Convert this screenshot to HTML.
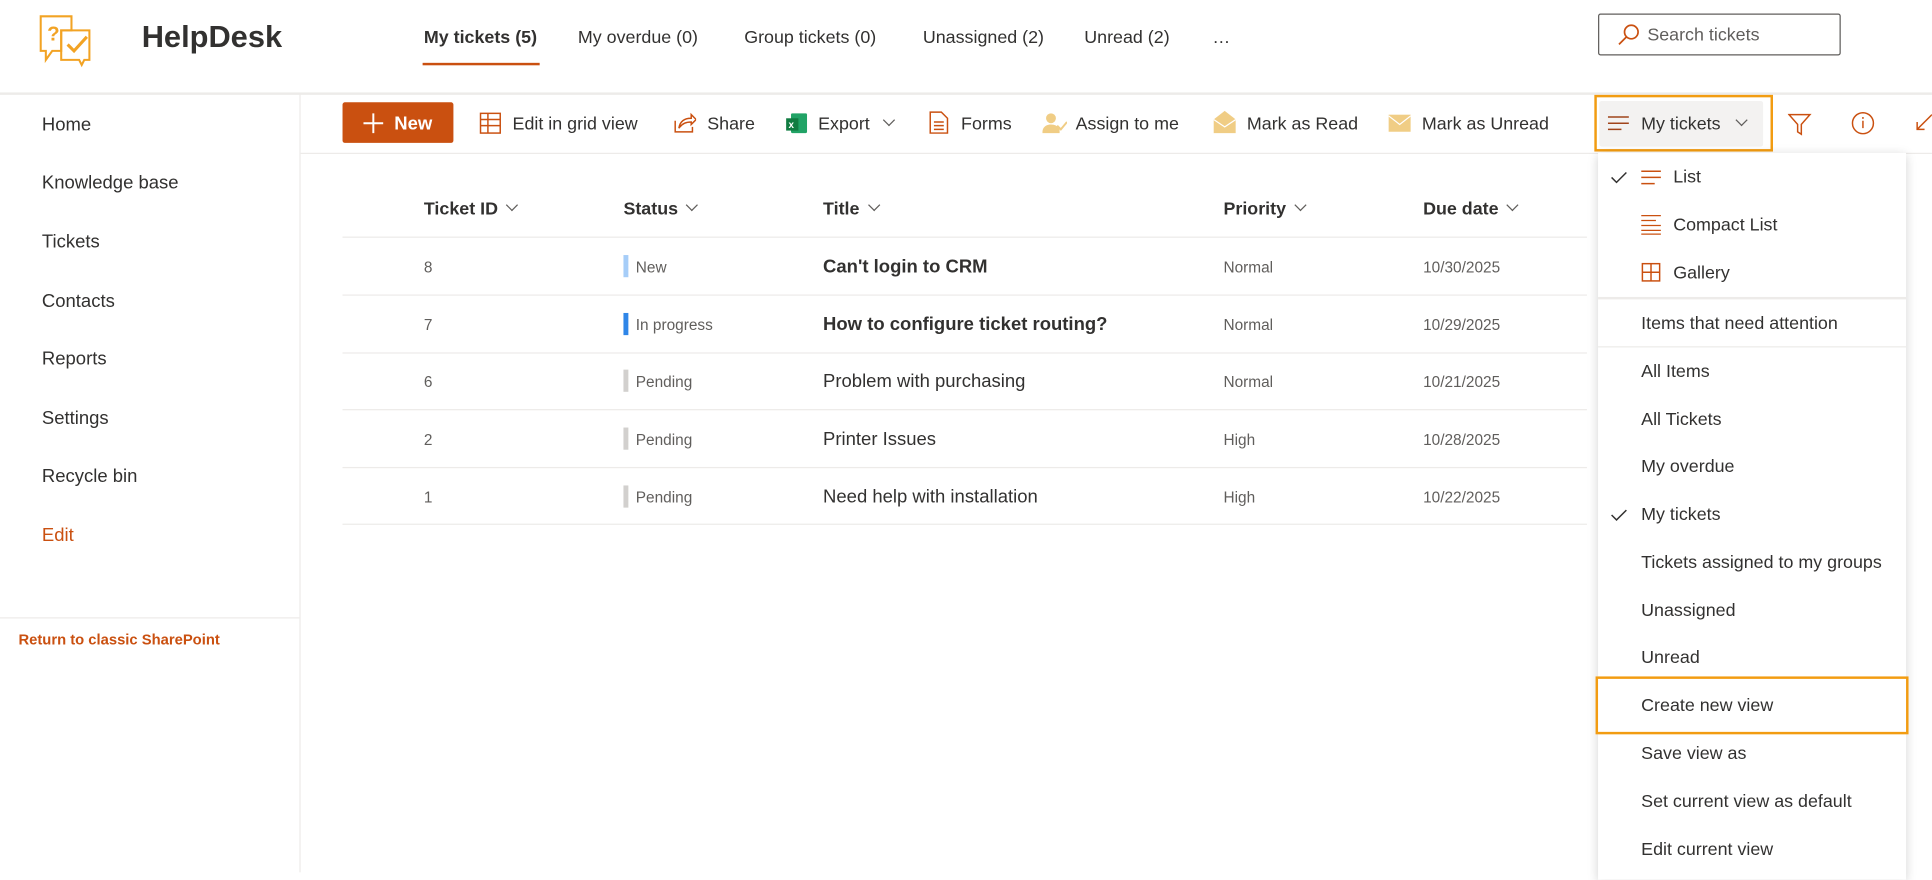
<!DOCTYPE html>
<html><head><meta charset="utf-8"><style>
*{margin:0;padding:0;box-sizing:border-box}
html,body{width:1932px;height:872px;overflow:hidden;background:#fff}
#w{position:absolute;left:0;top:0;width:1568px;height:708px;transform:scale(1.2321);transform-origin:0 0;font-family:"Liberation Sans",sans-serif;color:#323130}
.a{position:absolute;white-space:nowrap}
.t{font-size:14.5px;line-height:18px}
.hl{position:absolute;background:#edebe9;height:1px}
svg{position:absolute}
.nav{position:absolute;left:34px;font-size:15px;color:#323130}
.o{color:#ca5010}
.th{font-size:14.5px;font-weight:bold;color:#323130}
.chev{display:inline-block;width:7px;height:7px;border-right:1px solid #605e5c;border-bottom:1px solid #605e5c;transform:rotate(45deg);margin-left:8px;position:relative;top:-4px}
.r{font-size:12.5px;color:#605e5c}
.ti{font-size:15px;color:#323130}
.bar{position:absolute;width:4px;height:18px}
.mi{position:absolute;left:1332px;font-size:14.5px;color:#323130}
</style></head><body><div id="w">
<!-- logo -->
<svg style="left:32px;top:11px" width="52" height="44" viewBox="0 0 50 42" fill="none" stroke="#f2a324" stroke-width="1.6">
<path d="M1 2h24v11H17v16H10l-5 7v-7H1z"/>
<path d="M17 13h22v23h-4l-2 4-2-4H17z"/>
<text x="6" y="21" fill="#f2a324" stroke="none" font-size="16" font-weight="bold" font-family="Liberation Sans">?</text>
<path d="M22 24l5 5 10-11" stroke-width="2.4"/>
</svg>
<div class="a" style="left:115px;top:16px;font-size:25px;font-weight:bold;color:#323130">HelpDesk</div>
<div class="a t" style="left:344px;top:22px;font-weight:bold">My tickets (5)</div>
<div class="a" style="left:343px;top:51px;width:95px;height:2px;background:#ca5010"></div>
<div class="a t" style="left:469px;top:22px">My overdue (0)</div>
<div class="a t" style="left:604px;top:22px">Group tickets (0)</div>
<div class="a t" style="left:749px;top:22px">Unassigned (2)</div>
<div class="a t" style="left:880px;top:22px">Unread (2)</div>
<div class="a t" style="left:984px;top:22px">…</div>
<div class="a" style="left:1297px;top:11px;width:197px;height:34px;border:1px solid #605e5c;border-radius:2px"></div>
<svg style="left:1313px;top:19px" width="18" height="18" viewBox="0 0 18 18" fill="none" stroke="#ca5010" stroke-width="1.4"><circle cx="11" cy="7" r="5.5"/><path d="M7 11l-6 6"/></svg>
<div class="a t" style="left:1337px;top:20px;color:#605e5c">Search tickets</div>
<div class="hl" style="left:0;top:75px;width:1568px;height:2px"></div>
<!-- left nav -->
<div class="a" style="left:243px;top:76px;width:1px;height:632px;background:#edebe9"></div>
<div class="nav a" style="top:93px">Home</div>
<div class="nav a" style="top:140px">Knowledge base</div>
<div class="nav a" style="top:188px">Tickets</div>
<div class="nav a" style="top:236px">Contacts</div>
<div class="nav a" style="top:283px">Reports</div>
<div class="nav a" style="top:331px">Settings</div>
<div class="nav a" style="top:378px">Recycle bin</div>
<div class="nav a" style="top:426px;color:#ca5010">Edit</div>
<div class="hl" style="left:0;top:501px;width:243px"></div>
<div class="a o" style="left:15px;top:512px;font-size:12px;font-weight:bold">Return to classic SharePoint</div>
<!-- command bar -->
<div class="hl" style="left:244px;top:124px;width:1324px"></div>
<div class="a" style="left:278px;top:83px;width:90px;height:33px;background:#ca5010;border-radius:2px"></div>
<svg style="left:294px;top:91px" width="18" height="18"><path d="M9 1v16M1 9h16" stroke="#fff" stroke-width="1.6"/></svg>
<div class="a" style="left:320px;top:92px;color:#fff;font-weight:bold;font-size:15px">New</div>
<svg style="left:389px;top:91px" width="18" height="18" fill="none" stroke="#ca5010" stroke-width="1.2"><rect x="1" y="1" width="16" height="16"/><path d="M1 6h16M1 11h16M7 1v16"/></svg>
<div class="a t" style="left:416px;top:92px">Edit in grid view</div>
<svg style="left:547px;top:90px" width="18" height="18" fill="none" stroke="#ca5010" stroke-width="1.2"><path d="M1 8v9h14v-4"/><path d="M4 14c1-6 5-8 10-8V3l4 4-4 4V9c-4 0-7 1-10 5z"/></svg>
<div class="a t" style="left:574px;top:92px">Share</div>
<svg style="left:638px;top:91px" width="18" height="18"><rect x="4" y="1" width="13" height="16" rx="1" fill="#21a366"/><rect x="0" y="5" width="10" height="10" fill="#107c41"/><text x="2" y="13" font-size="8" fill="#fff" font-family="Liberation Sans" font-weight="bold">x</text></svg>
<div class="a t" style="left:664px;top:92px">Export <span class="chev"></span></div>
<svg style="left:754px;top:90px" width="16" height="19" fill="none" stroke="#ca5010" stroke-width="1.2"><path d="M1 1h9l5 5v12H1z"/><path d="M4 9h8M4 12h8M4 15h8"/></svg>
<div class="a t" style="left:780px;top:92px">Forms</div>
<svg style="left:846px;top:91px" width="20" height="18"><circle cx="7" cy="5" r="4" fill="#f0cd85"/><path d="M0 17c0-5 3-7 7-7s6 2 7 4v3z" fill="#f0cd85"/><path d="M12 11l3 3 5-6" stroke="#f0cd85" stroke-width="1.6" fill="none"/></svg>
<div class="a t" style="left:873px;top:92px">Assign to me</div>
<svg style="left:985px;top:89px" width="18" height="20"><path d="M0 8l9-7 9 7v11H0z" fill="#f0cd85"/><path d="M0 8l9 6 9-6" stroke="#fff" fill="none"/></svg>
<div class="a t" style="left:1012px;top:92px">Mark as Read</div>
<svg style="left:1127px;top:93px" width="18" height="14"><rect width="18" height="14" fill="#f0cd85"/><path d="M0 1l9 7 9-7" stroke="#fff" fill="none"/></svg>
<div class="a t" style="left:1154px;top:92px">Mark as Unread</div>
<!-- view button -->
<div class="a" style="left:1294px;top:77px;width:145px;height:46px;border:2px solid #f29c11"></div>
<div class="a" style="left:1298px;top:82px;width:133px;height:37px;background:#f3f2f1;border-radius:2px"></div>
<svg style="left:1305px;top:93px" width="18" height="14" stroke="#a0441a" stroke-width="1.2"><path d="M0 2h17M0 7h17M0 12h11"/></svg>
<div class="a t" style="left:1332px;top:92px">My tickets <span class="chev" style="margin-left:10px"></span></div>
<svg style="left:1451px;top:91px" width="20" height="20" fill="none" stroke="#ca5010" stroke-width="1.2"><path d="M1 2h17l-7 8v8l-3-2v-6z"/></svg>
<svg style="left:1502px;top:90px" width="20" height="20" fill="none" stroke="#ca5010" stroke-width="1.2"><circle cx="10" cy="10" r="8.5"/><path d="M10 8v6M10 5v1.5"/></svg>
<svg style="left:1554px;top:91px" width="14" height="18" fill="none" stroke="#ca5010" stroke-width="1.2"><path d="M14 2L2 14M2 8v6h6"/></svg>
<!-- table -->
<div class="a th" style="left:344px;top:162px">Ticket ID<span class="chev"></span></div>
<div class="a th" style="left:506px;top:162px">Status<span class="chev"></span></div>
<div class="a th" style="left:668px;top:162px">Title<span class="chev"></span></div>
<div class="a th" style="left:993px;top:162px">Priority<span class="chev"></span></div>
<div class="a th" style="left:1155px;top:162px">Due date<span class="chev"></span></div>
<div class="hl" style="left:278px;top:192px;width:1010px"></div>
<div class="hl" style="left:278px;top:239px;width:1010px"></div>
<div class="hl" style="left:278px;top:286px;width:1010px"></div>
<div class="hl" style="left:278px;top:332px;width:1010px"></div>
<div class="hl" style="left:278px;top:379px;width:1010px"></div>
<div class="hl" style="left:278px;top:425px;width:1010px"></div>

<div class="a r" style="left:344px;top:210px">8</div><div class="bar" style="left:506px;top:207px;background:#a6cdf8"></div><div class="a r" style="left:516px;top:210px">New</div><div class="a ti" style="left:668px;top:208px;font-weight:bold">Can't login to CRM</div><div class="a r" style="left:993px;top:210px">Normal</div><div class="a r" style="left:1155px;top:210px">10/30/2025</div>
<div class="a r" style="left:344px;top:257px">7</div><div class="bar" style="left:506px;top:254px;background:#2f86e8"></div><div class="a r" style="left:516px;top:257px">In progress</div><div class="a ti" style="left:668px;top:255px;font-weight:bold">How to configure ticket routing?</div><div class="a r" style="left:993px;top:257px">Normal</div><div class="a r" style="left:1155px;top:257px">10/29/2025</div>
<div class="a r" style="left:344px;top:303px">6</div><div class="bar" style="left:506px;top:300px;background:#d2d0ce"></div><div class="a r" style="left:516px;top:303px">Pending</div><div class="a ti" style="left:668px;top:301px">Problem with purchasing</div><div class="a r" style="left:993px;top:303px">Normal</div><div class="a r" style="left:1155px;top:303px">10/21/2025</div>
<div class="a r" style="left:344px;top:350px">2</div><div class="bar" style="left:506px;top:347px;background:#d2d0ce"></div><div class="a r" style="left:516px;top:350px">Pending</div><div class="a ti" style="left:668px;top:348px">Printer Issues</div><div class="a r" style="left:993px;top:350px">High</div><div class="a r" style="left:1155px;top:350px">10/28/2025</div>
<div class="a r" style="left:344px;top:397px">1</div><div class="bar" style="left:506px;top:394px;background:#d2d0ce"></div><div class="a r" style="left:516px;top:397px">Pending</div><div class="a ti" style="left:668px;top:395px">Need help with installation</div><div class="a r" style="left:993px;top:397px">High</div><div class="a r" style="left:1155px;top:397px">10/22/2025</div>
<!-- dropdown -->
<div class="a" style="left:1297px;top:124px;width:250px;height:590px;background:#fff;box-shadow:0 2px 8px rgba(0,0,0,.18)"></div>
<svg style="left:1307px;top:138px" width="14" height="12" fill="none" stroke="#323130" stroke-width="1.2"><path d="M1 6l4 4 8-8"/></svg>
<svg style="left:1332px;top:138px" width="18" height="13" stroke="#ca5010" stroke-width="1.2"><path d="M0 1h16M0 6h16M0 11h11"/></svg>
<div class="mi a" style="left:1358px;top:136px">List</div>
<svg style="left:1332px;top:174px" width="18" height="17" stroke="#ca5010" stroke-width="1"><path d="M0 1h16M0 5h12M0 9h16M0 13h16M0 16h16"/></svg>
<div class="mi a" style="left:1358px;top:175px">Compact List</div>
<svg style="left:1332px;top:213px" width="16" height="16" fill="none" stroke="#ca5010" stroke-width="1.2"><rect x="1" y="1" width="14" height="14"/><path d="M8 1v14M1 8h14"/></svg>
<div class="mi a" style="left:1358px;top:214px">Gallery</div>
<div class="hl" style="left:1297px;top:241px;width:250px;height:2px"></div>
<div class="mi a" style="top:255px">Items that need attention</div>
<div class="hl" style="left:1297px;top:281px;width:250px"></div>
<div class="mi a" style="top:294px">All Items</div>
<div class="mi a" style="top:333px">All Tickets</div>
<div class="mi a" style="top:371px">My overdue</div>
<svg style="left:1307px;top:412px" width="14" height="12" fill="none" stroke="#323130" stroke-width="1.2"><path d="M1 6l4 4 8-8"/></svg>
<div class="mi a" style="top:410px">My tickets</div>
<div class="mi a" style="top:449px">Tickets assigned to my groups</div>
<div class="mi a" style="top:488px">Unassigned</div>
<div class="mi a" style="top:526px">Unread</div>
<div class="a" style="left:1295px;top:549px;width:254px;height:47px;border:2px solid #f29c11"></div>
<div class="mi a" style="top:565px">Create new view</div>
<div class="mi a" style="top:604px">Save view as</div>
<div class="mi a" style="top:643px">Set current view as default</div>
<div class="mi a" style="top:682px">Edit current view</div>
</div></body></html>
